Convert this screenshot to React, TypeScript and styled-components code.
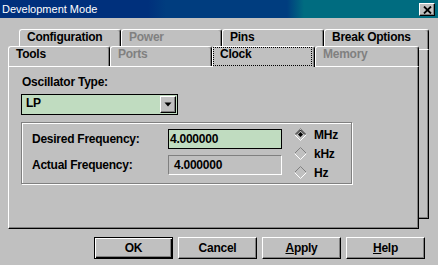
import React from 'react';
import styled, { createGlobalStyle } from 'styled-components';

const FACE = '#c0c0c0';
const SHADOW = '#808080';
const GREEN = '#c0dcc0';
const FONT = `"Liberation Sans", Arial, sans-serif`;

const GlobalStyle = createGlobalStyle`
  html, body {
    margin: 0;
    padding: 0;
    background: ${FACE};
    overflow: hidden;
  }
  * {
    box-sizing: border-box;
  }
`;

const Window = styled.div`
  width: 438px;
  height: 265px;
  display: flex;
  flex-direction: column;
  background: ${FACE};
  font-family: ${FONT};
  font-size: 12px;
  font-weight: bold;
  letter-spacing: -0.25px;
  color: #000;
`;

const TitleBar = styled.div`
  height: 18px;
  display: flex;
  align-items: flex-start;
  padding: 0 3px 0 2px;
  background: linear-gradient(
    90deg,
    #00307c 0,
    #00307c 148px,
    #003d7f 166px,
    #003d7f 287px,
    #006c80 304px,
    #006c80 100%
  );
`;

const Title = styled.span`
  color: #fff;
  font-size: 11px;
  font-weight: normal;
  letter-spacing: 0;
  line-height: 18px;
`;

const CloseButton = styled.div`
  margin: 3px 0 0 auto;
  width: 16px;
  height: 13px;
  display: flex;
  align-items: center;
  justify-content: center;
  background: ${FACE};
  border: 1px solid;
  border-color: #fff #000 #000 #fff;
  box-shadow: inset -1px -1px 0 ${SHADOW};
`;

const Body = styled.div`
  display: flex;
  flex-direction: column;
  padding-top: 11px;
`;

const TabControl = styled.div`
  display: grid;
`;

const BackLayer = styled.div`
  grid-area: 1 / 1;
  margin-left: 19px;
  width: 410px;
  display: flex;
  flex-direction: column;
`;

const FrontLayer = styled.div`
  grid-area: 1 / 1;
  position: relative;
  margin: 17px 0 0 8px;
  width: 411px;
  display: flex;
  flex-direction: column;
`;

const TabRow = styled.div`
  height: 20px;
  display: flex;
  align-items: flex-start;
`;

const Tab = styled.div<{ $width: number; $active?: boolean; $disabled?: boolean }>`
  position: relative;
  z-index: ${(p) => (p.$active ? 1 : 0)};
  width: ${(p) => p.$width}px;
  height: ${(p) => (p.$active ? 21 : 20)}px;
  margin-bottom: ${(p) => (p.$active ? -1 : 0)}px;
  background: ${FACE};
  border-top: 1px solid #fff;
  border-left: 1px solid #fff;
  border-right: 1px solid #000;
  border-radius: 3px 3px 0 0;
  box-shadow: inset -1px 0 0 ${SHADOW};
  color: ${(p) => (p.$disabled ? SHADOW : '#000')};
`;

const TabLabel = styled.div<{ $focused?: boolean }>`
  height: 19px;
  margin-right: 2px;
  border: 1px ${(p) => (p.$focused ? 'dotted #000' : 'solid transparent')};
  padding-left: 6px;
  line-height: 13px;
  white-space: nowrap;
`;

const BackPage = styled.div`
  height: 170px;
  border: 1px solid;
  border-color: #fff #000 #000 #fff;
  box-shadow: inset -1px -1px 0 ${SHADOW};
`;

const Panel = styled.div`
  height: 163px;
  background: ${FACE};
  border: 1px solid;
  border-color: #fff #000 #000 #fff;
  box-shadow: inset -1px -1px 0 ${SHADOW};
  padding: 8px 0 0 13px;
`;

const Caption = styled.div`
  line-height: 14px;
`;

const Select = styled.div`
  margin: 5px 0 0 -1px;
  width: 157px;
  height: 21px;
  display: flex;
  justify-content: space-between;
  align-items: flex-start;
  border: 1px solid #000;
  background: ${GREEN};
`;

const SelectValue = styled.span`
  padding-left: 4px;
  line-height: 17px;
`;

const DropButton = styled.div`
  width: 16px;
  height: 17px;
  margin: 1px 1px 0 0;
  display: flex;
  align-items: center;
  justify-content: center;
  background: ${FACE};
  border: 1px solid;
  border-color: #fff #000 #000 #fff;
  box-shadow: inset -1px -1px 0 ${SHADOW};
`;

const Group = styled.div`
  margin: 7px 0 0 -1px;
  width: 331px;
  height: 62px;
  display: flex;
  padding: 2px 0 0 10px;
  border: 1px solid ${SHADOW};
  box-shadow: inset 1px 1px 0 #fff, 1px 1px 0 #fff;
`;

const FreqColumn = styled.div`
  display: flex;
  flex-direction: column;
  gap: 6px;
  padding-top: 4px;
`;

const FieldRow = styled.div`
  display: flex;
  align-items: center;
`;

const FieldLabel = styled.span`
  width: 136px;
  line-height: 14px;
`;

const Field = styled.div<{ $editable?: boolean }>`
  width: 114px;
  height: 20px;
  line-height: 18px;
  border: 1px solid;
  border-color: ${(p) => (p.$editable ? '#000' : `${SHADOW} #fff #fff ${SHADOW}`)};
  background: ${(p) => (p.$editable ? GREEN : FACE)};
  padding-left: ${(p) => (p.$editable ? 1 : 5)}px;
`;

const RadioColumn = styled.div`
  margin-left: 12px;
  display: flex;
  flex-direction: column;
`;

const RadioRow = styled.div`
  height: 19px;
  display: flex;
  align-items: center;
  gap: 7px;
  line-height: 14px;
`;

const ButtonRow = styled.div`
  margin-top: 8px;
  padding-right: 13px;
  display: flex;
  justify-content: flex-end;
  gap: 5px;
`;

const DialogButton = styled.button<{ $default?: boolean }>`
  width: 79px;
  height: 22px;
  padding: 0;
  font: inherit;
  letter-spacing: inherit;
  color: #000;
  background: ${FACE};
  border: 1px solid;
  border-color: ${(p) => (p.$default ? '#000' : '#fff #000 #000 #fff')};
  box-shadow: ${(p) =>
    p.$default
      ? `inset 1px 1px 0 #fff, inset -1px -1px 0 #000, inset -2px -2px 0 ${SHADOW}`
      : `inset -1px -1px 0 ${SHADOW}`};
  line-height: 18px;
`;

function CloseGlyph() {
  return (
    <svg width="9" height="8" viewBox="0 0 9 8">
      <path d="M1 0.5 L8 7.5 M8 0.5 L1 7.5" stroke="#000" strokeWidth="1.8" />
    </svg>
  );
}

function DownArrow() {
  return (
    <svg width="8" height="5" viewBox="0 0 8 5">
      <polygon points="0.5,0.5 7.5,0.5 4,4.5" fill="#000" />
    </svg>
  );
}

function Diamond({ checked }: { checked?: boolean }) {
  return (
    <svg width="13" height="13" viewBox="0 0 13 13">
      <path d="M0.5 6.5 L6.5 0.5 L12.5 6.5" fill="none" stroke={SHADOW} />
      <path d="M0.5 6.5 L6.5 12.5 L12.5 6.5" fill="none" stroke="#fff" />
      {checked && (
        <>
          <path d="M2 6.5 L6.5 2 L11 6.5" fill="none" stroke="#000" />
          <polygon points="6.5,4 9,6.5 6.5,9 4,6.5" fill="#000" />
        </>
      )}
    </svg>
  );
}

const backTabs = [
  { label: 'Configuration', width: 102 },
  { label: 'Power', width: 101, disabled: true },
  { label: 'Pins', width: 102 },
  { label: 'Break Options', width: 105 },
];

const frontTabs = [
  { label: 'Tools', width: 102 },
  { label: 'Ports', width: 102, disabled: true },
  { label: 'Clock', width: 103, active: true },
  { label: 'Memory', width: 104, disabled: true },
];

const units = ['MHz', 'kHz', 'Hz'];

export default function App() {
  return (
    <Window>
      <GlobalStyle />
      <TitleBar>
        <Title>Development Mode</Title>
        <CloseButton>
          <CloseGlyph />
        </CloseButton>
      </TitleBar>
      <Body>
        <TabControl>
          <BackLayer>
            <TabRow>
              {backTabs.map((t) => (
                <Tab key={t.label} $width={t.width} $disabled={t.disabled}>
                  <TabLabel>{t.label}</TabLabel>
                </Tab>
              ))}
            </TabRow>
            <BackPage />
          </BackLayer>
          <FrontLayer>
            <TabRow>
              {frontTabs.map((t) => (
                <Tab key={t.label} $width={t.width} $active={t.active} $disabled={t.disabled}>
                  <TabLabel $focused={t.active}>{t.label}</TabLabel>
                </Tab>
              ))}
            </TabRow>
            <Panel>
              <Caption>Oscillator Type:</Caption>
              <Select>
                <SelectValue>LP</SelectValue>
                <DropButton>
                  <DownArrow />
                </DropButton>
              </Select>
              <Group>
                <FreqColumn>
                  <FieldRow>
                    <FieldLabel>Desired Frequency:</FieldLabel>
                    <Field $editable>4.000000</Field>
                  </FieldRow>
                  <FieldRow>
                    <FieldLabel>Actual Frequency:</FieldLabel>
                    <Field>4.000000</Field>
                  </FieldRow>
                </FreqColumn>
                <RadioColumn>
                  {units.map((u, i) => (
                    <RadioRow key={u}>
                      <Diamond checked={i === 0} />
                      <span>{u}</span>
                    </RadioRow>
                  ))}
                </RadioColumn>
              </Group>
            </Panel>
          </FrontLayer>
        </TabControl>
        <ButtonRow>
          <DialogButton $default>OK</DialogButton>
          <DialogButton>Cancel</DialogButton>
          <DialogButton>
            <u>A</u>pply
          </DialogButton>
          <DialogButton>
            <u>H</u>elp
          </DialogButton>
        </ButtonRow>
      </Body>
    </Window>
  );
}
